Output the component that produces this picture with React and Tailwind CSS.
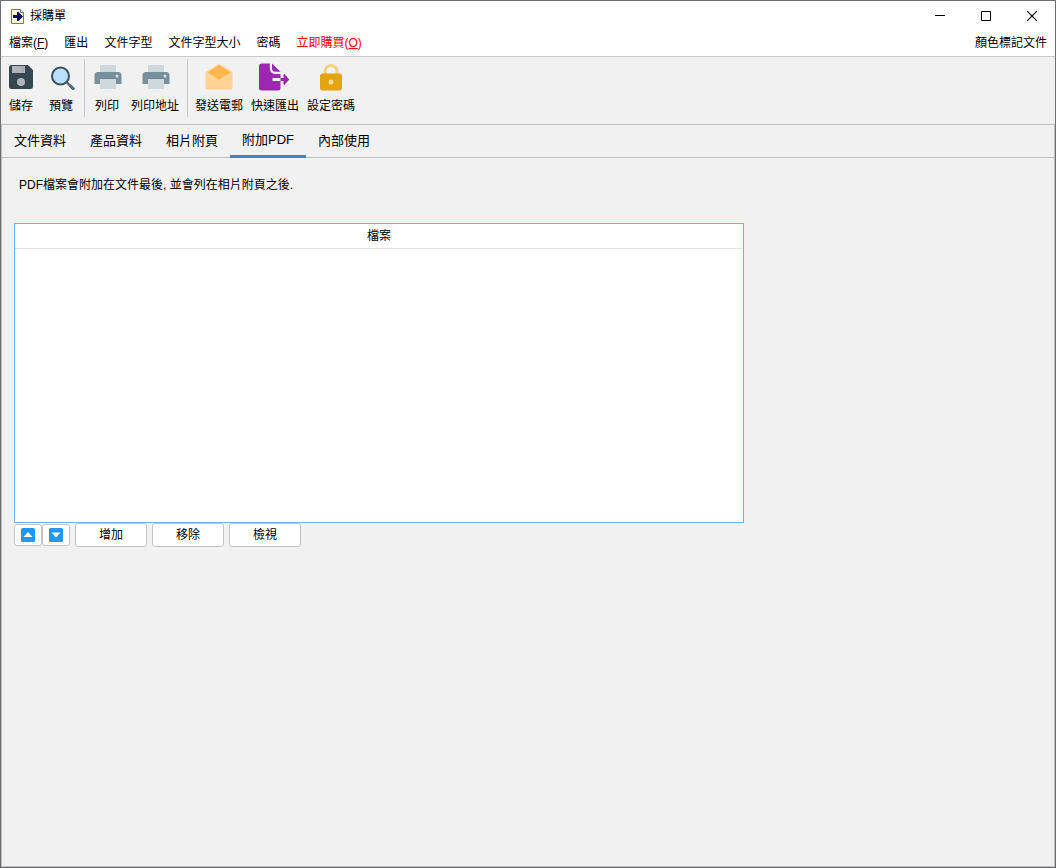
import React, { useState } from "react";

function AppIcon() {
  return (
    <svg width="13" height="16" viewBox="0 0 13 16" aria-hidden="true">
      <path d="M.5 1.500h9l3 3v11H.5z" fill="#fffbd0" stroke="#6f7391" />
      <path d="M9.500 1.500v3h3" fill="#fff" stroke="#6f7391" />
      <path d="M2 7h4V4h1.500L12 8.500 7.500 13H6v-3H2z" fill="#0a0a6e" />
    </svg>
  );
}

function SaveIcon() {
  return (
    <svg width="24" height="24" viewBox="0 0 24 24" aria-hidden="true">
      <path d="M2.500 0H19l5 5v16.500a2.500 2.500 0 0 1-2.500 2.500h-19A2.500 2.500 0 0 1 0 21.500v-19A2.500 2.500 0 0 1 2.500 0z" fill="#37474f" />
      <path d="M3 1h13v7H3z" fill="#b0b5ba" />
      <path d="M12.500 2H15v5h-2.500z" fill="#a3a9ae" />
      <circle cx="12" cy="17" r="4" fill="#b0b5ba" />
    </svg>
  );
}

function PreviewIcon() {
  return (
    <svg width="28" height="26" viewBox="-3 -1 28 26" className="max-w-none" aria-hidden="true">
      <path d="M16.500 17l7.500 7.500" stroke="#616161" strokeWidth="2.400" />
      <path d="M19.500 20l4.500 4.500" stroke="#546a75" strokeWidth="3" />
      <circle cx="10.500" cy="11" r="8.500" fill="#bbdefb" stroke="#37535f" strokeWidth="2" />
    </svg>
  );
}

function PrinterIcon() {
  return (
    <svg width="30" height="24" viewBox="-2 0 30 24" className="max-w-none" aria-hidden="true">
      <path d="M6 0h16v9H6z" fill="#cfd8dc" />
      <path d="M4 7h20a3.500 3.500 0 0 1 3.500 3.500V19H.5v-8.500A3.500 3.500 0 0 1 4 7z" fill="#78909c" />
      <circle cx="23" cy="11" r="1.500" fill="#cfe0e7" />
      <path d="M6 14h16v10H6z" fill="#cfd8dc" />
      <path d="M5 13h18v1H5z" fill="#6b8592" />
    </svg>
  );
}

function MailIcon() {
  return (
    <svg width="28" height="26" viewBox="0 0 28 26" aria-hidden="true">
      <path d="M.5 8L12.500.8a3 3 0 0 1 3 0L27.500 8v15.500a2 2 0 0 1-2 2h-23a2 2 0 0 1-2-2z" fill="#ffd494" />
      <path d="M2.500 8.500L13 1.400a2 2 0 0 1 2 0l10.500 7.100L14 15.500z" fill="#ffb74d" />
    </svg>
  );
}

function ExportIcon() {
  return (
    <svg width="32" height="28" viewBox="1 0 32 28" aria-hidden="true">
      <path d="M3.500.5h8.300V5.500a5.500 5.500 0 0 0 5.500 5.500H22.500v4H14.500v3h8v7a2.500 2.500 0 0 1-2.500 2.500H3.500A2.500 2.500 0 0 1 1 25V3A2.500 2.500 0 0 1 3.500.5z" fill="#9c27b0" />
      <path d="M14 .5l8.500 8.300H17.500A3.500 3.500 0 0 1 14 5.300z" fill="#9c27b0" />
      <path d="M22.500 15h3v-3.500l1-.5 4.700 5.500-4.700 5.500-1-.5V18h-3z" fill="#9c27b0" />
    </svg>
  );
}

function LockIcon() {
  return (
    <svg width="24" height="28" viewBox="0 0 24 28" aria-hidden="true">
      <path d="M6 11V8.500a6 6 0 0 1 12 0V11" fill="none" stroke="#f3d27c" strokeWidth="3" />
      <rect x="1" y="10.500" width="22" height="17" rx="2.500" fill="#e2a50d" />
      <circle cx="12" cy="19" r="2.500" fill="#f6dc96" />
    </svg>
  );
}

function ArrowIcon({ down }) {
  return (
    <svg width="14" height="14" viewBox="0 0 14 14" aria-hidden="true">
      <rect width="14" height="14" rx="1.500" fill="#2196f3" />
      <path d={down ? "M2.500 4.500h9L7 9.500z" : "M2.500 9h9L7 4z"} fill="#fff" />
    </svg>
  );
}

const menus = [
  { label: "檔案", hotkey: "F" },
  { label: "匯出" },
  { label: "文件字型" },
  { label: "文件字型大小" },
  { label: "密碼" },
  { label: "立即購買", hotkey: "O", accent: true },
];

const toolGroups = [
  [
    { label: "儲存", icon: SaveIcon },
    { label: "預覽", icon: PreviewIcon },
  ],
  [
    { label: "列印", icon: PrinterIcon },
    { label: "列印地址", icon: PrinterIcon },
  ],
  [
    { label: "發送電郵", icon: MailIcon },
    { label: "快速匯出", icon: ExportIcon },
    { label: "設定密碼", icon: LockIcon },
  ],
];

const groupStyles = [
  "gap-4 pl-2 pr-[11px]",
  "gap-3 border-l border-[#c8c8c8] pl-[10px] pr-2",
  "gap-2 border-l border-[#c8c8c8] pl-[7px]",
];

const tabs = ["文件資料", "產品資料", "相片附頁", "附加PDF", "內部使用"];

function TitleBar() {
  return (
    <header className="flex h-[29px] items-center justify-between bg-white pl-[10px]">
      <div className="flex items-center gap-[6px]">
        <AppIcon />
        <h1>採購單</h1>
      </div>
      <div className="flex h-full">
        <button aria-label="最小化" className="flex w-[46px] items-center justify-center">
          <svg width="10" height="10" viewBox="0 0 10 10"><path d="M0 4.500h10" stroke="#000" /></svg>
        </button>
        <button aria-label="最大化" className="flex w-[46px] items-center justify-center">
          <svg width="10" height="10" viewBox="0 0 10 10"><path d="M.5.5h9v9h-9z" fill="none" stroke="#000" /></svg>
        </button>
        <button aria-label="關閉" className="flex w-[46px] items-center justify-center">
          <svg width="10" height="10" viewBox="0 0 10 10"><path d="M0 0l10 10M10 0L0 10" stroke="#000" strokeWidth="1.200" /></svg>
        </button>
      </div>
    </header>
  );
}

function MenuBar() {
  return (
    <nav className="flex h-[27px] justify-between border-b border-[#c8c8c8] bg-white px-2">
      <div className="flex gap-4">
        {menus.map((m) => (
          <button key={m.label} className={m.accent ? "text-[#ff0000]" : ""}>
            {m.label}
            {m.hotkey && <>(<u>{m.hotkey}</u>)</>}
          </button>
        ))}
      </div>
      <button>顏色標記文件</button>
    </nav>
  );
}

function ToolBar() {
  return (
    <div role="toolbar" aria-label="工具列" className="flex h-[68px] border-b border-[#c0c0c0] pt-[2px] pb-[7px]">
      {toolGroups.map((group, i) => (
        <div key={i} className={`flex ${groupStyles[i]}`}>
          {group.map(({ label, icon: Icon }) => (
            <button key={label} className={`flex flex-col items-center ${label.length > 2 ? "w-12" : "w-6"}`}>
              <span className="flex h-9 items-center"><Icon /></span>
              <span className="leading-[22px] whitespace-nowrap">{label}</span>
            </button>
          ))}
        </div>
      ))}
    </div>
  );
}

function FileTable() {
  return (
    <div className="h-[300px] w-[730px] max-w-full border border-[#7eaedc] bg-white">
      <table className="w-full">
        <thead>
          <tr className="h-6 border-b border-[#e2e2e2]">
            <th scope="col" className="p-0 font-normal">檔案</th>
          </tr>
        </thead>
        <tbody />
      </table>
    </div>
  );
}

export default function App() {
  const [active, setActive] = useState("附加PDF");

  return (
    <div className="flex min-h-screen flex-col border border-[#6e6e70] bg-[#f1f1f1] font-['Liberation_Sans','Noto_Sans_CJK_TC',sans-serif] text-[12px] leading-4 text-black">
      <TitleBar />
      <MenuBar />
      <ToolBar />
      <main className="flex flex-1 flex-col border-x border-b border-[#c0c0c0]">
        <div role="tablist" className="flex h-[33px] border-b border-[#c0c0c0] text-[13px]">
          {tabs.map((t) => (
            <button
              key={t}
              role="tab"
              aria-selected={t === active}
              onClick={() => setActive(t)}
              className={`-mb-px w-[76px] border-b-3 whitespace-nowrap ${t === active ? "border-[#4083c9]" : "border-transparent pt-[2px]"}`}
            >
              {t}
            </button>
          ))}
        </div>
        <section role="tabpanel" aria-label={active} className="px-3 pt-[19px]">
          <p className="pl-[5px]">PDF檔案會附加在文件最後, 並會列在相片附頁之後.</p>
          <div className="mt-[30px]">
            <FileTable />
          </div>
          <div className="flex items-center gap-[5px]">
            <div className="flex">
              <button aria-label="上移" className="flex h-[22px] w-7 items-center justify-center rounded-[3px] border border-[#c4c4c4] bg-white">
                <ArrowIcon />
              </button>
              <button aria-label="下移" className="flex h-[22px] w-7 items-center justify-center rounded-[3px] border border-[#c4c4c4] bg-white">
                <ArrowIcon down />
              </button>
            </div>
            {["增加", "移除", "檢視"].map((label) => (
              <button key={label} className="h-6 w-[72px] rounded-[3px] border border-[#c4c4c4] bg-white">
                {label}
              </button>
            ))}
          </div>
        </section>
      </main>
    </div>
  );
}
